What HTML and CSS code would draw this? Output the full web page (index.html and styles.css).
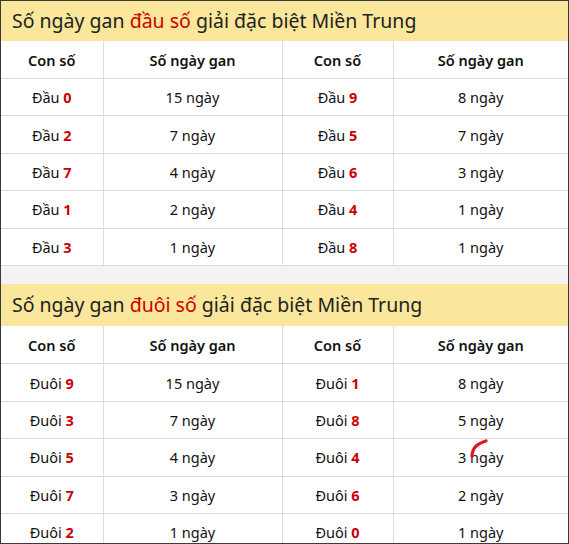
FILE: index.html
```html
<!DOCTYPE html>
<html lang="vi">
<head>
<meta charset="utf-8">
<link rel="stylesheet" href="styles.css">
</head>
<body>
<div class="frame">
  <section class="block">
    <h2 class="title">Số ngày gan <span class="hl">đầu số</span> giải đặc biệt Miền Trung</h2>
    <table class="gan">
      <colgroup><col class="c1"><col class="c2"><col class="c3"><col class="c4"></colgroup>
      <thead><tr><th>Con số</th><th>Số ngày gan</th><th>Con số</th><th>Số ngày gan</th></tr></thead>
      <tbody>
        <tr><td>Đầu <b>0</b></td><td>15 ngày</td><td>Đầu <b>9</b></td><td>8 ngày</td></tr>
        <tr><td>Đầu <b>2</b></td><td>7 ngày</td><td>Đầu <b>5</b></td><td>7 ngày</td></tr>
        <tr><td>Đầu <b>7</b></td><td>4 ngày</td><td>Đầu <b>6</b></td><td>3 ngày</td></tr>
        <tr><td>Đầu <b>1</b></td><td>2 ngày</td><td>Đầu <b>4</b></td><td>1 ngày</td></tr>
        <tr><td>Đầu <b>3</b></td><td>1 ngày</td><td>Đầu <b>8</b></td><td>1 ngày</td></tr>
      </tbody>
    </table>
  </section>
  <div class="gap"></div>
  <section class="block">
    <h2 class="title title-second">Số ngày gan <span class="hl">đuôi số</span> giải đặc biệt Miền Trung</h2>
    <table class="gan">
      <colgroup><col class="c1"><col class="c2"><col class="c3"><col class="c4"></colgroup>
      <thead><tr><th class="th-tall">Con số</th><th class="th-tall">Số ngày gan</th><th class="th-tall">Con số</th><th class="th-tall">Số ngày gan</th></tr></thead>
      <tbody>
        <tr><td>Đuôi <b>9</b></td><td>15 ngày</td><td>Đuôi <b>1</b></td><td>8 ngày</td></tr>
        <tr><td>Đuôi <b>3</b></td><td>7 ngày</td><td>Đuôi <b>8</b></td><td>5 ngày</td></tr>
        <tr><td>Đuôi <b>5</b></td><td>4 ngày</td><td>Đuôi <b>4</b></td><td class="marked">3 ngày<svg class="mark" width="24" height="22" viewBox="0 0 24 22"><path d="M3 19 Q3 8 17 4" fill="none" stroke="#e0161e" stroke-width="3.2" stroke-linecap="round"/></svg></td></tr>
        <tr><td>Đuôi <b>7</b></td><td>3 ngày</td><td>Đuôi <b>6</b></td><td>2 ngày</td></tr>
        <tr><td>Đuôi <b>2</b></td><td>1 ngày</td><td>Đuôi <b>0</b></td><td>1 ngày</td></tr>
      </tbody>
    </table>
  </section>
</div>
</body>
</html>
```

FILE: styles.css
```css
html, body {
  margin: 0;
  padding: 0;
  background: #ffffff;
}
.frame {
  width: 569px;
  height: 544px;
  box-sizing: border-box;
  border: 1px solid #3a3a3a;
  overflow: hidden;
  font-family: "Noto Sans", "Open Sans", sans-serif;
  color: #111;
}
.title {
  margin: 0;
  height: 40px;
  line-height: 40px;
  padding-left: 11px;
  background: #fae79b;
  font-size: 19.5px;
  font-weight: 400;
  color: #222;
  white-space: nowrap;
}
.title-second {
  height: 42px;
  line-height: 42px;
}
.hl {
  color: #cc0000;
}
.gan {
  width: 100%;
  border-collapse: collapse;
  table-layout: fixed;
}
.c1 { width: 102px; }
.c2 { width: 179px; }
.c3 { width: 111px; }
.c4 { width: auto; }
.gan th, .gan td {
  border: 1px solid #dcdcdc;
  text-align: center;
  padding: 0;
  font-size: 14.5px;
}
.gan tr > :first-child { border-left: none; }
.gan tr > :last-child { border-right: none; }
.gan thead tr > * { border-top: none; }
.gan th {
  height: 37px;
  font-weight: 600;
  color: #111;
}
.gan th.th-tall {
  height: 37.5px;
}
.gan td {
  height: 36.4px;
  font-weight: 400;
  color: #111;
}
.gan td b {
  color: #cc0000;
  font-weight: 700;
}
.gap {
  height: 18px;
  background: #f3f3f3;
}
.marked {
  position: relative;
}
.mark {
  position: absolute;
  left: 75px;
  top: -2px;
}
```
